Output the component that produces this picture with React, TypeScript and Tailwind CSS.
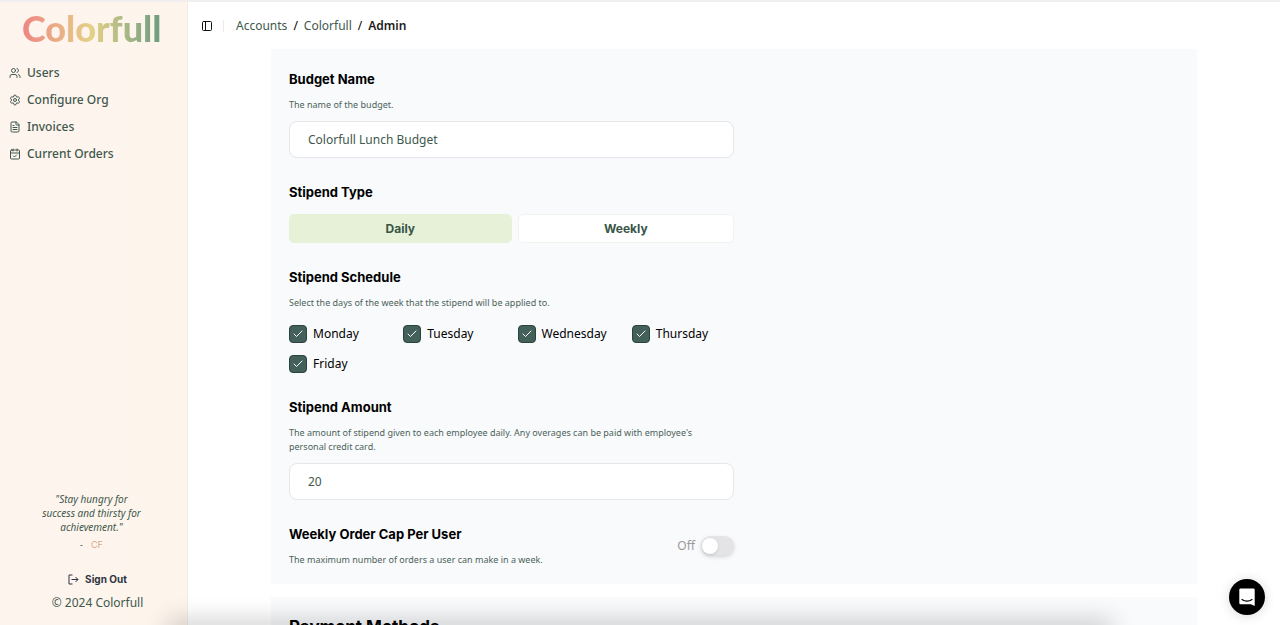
import { useState, type ReactNode } from 'react'
import { CalendarCheck, Check, FileText, PanelLeft, Settings, Users } from 'lucide-react'

type StipendType = 'Daily' | 'Weekly'

const NAV_ITEMS = [
  { label: 'Users', icon: Users },
  { label: 'Configure Org', icon: Settings },
  { label: 'Invoices', icon: FileText },
  { label: 'Current Orders', icon: CalendarCheck },
]

const DAYS = ['Monday', 'Tuesday', 'Wednesday', 'Thursday', 'Friday']

const Sidebar = () => (
  <aside className="flex w-[188px] shrink-0 flex-col border-r border-[#f6ebe2] bg-linear-to-r from-[#fef4ee] to-[#fdf5ec]">
    <a
      href="#"
      className="mt-1 ml-[22px] self-start bg-linear-to-r from-[#ec8583] via-[#e4d187] to-[#6a9c80] bg-clip-text font-[Lato,sans-serif] text-[36px] leading-[44px] font-black text-transparent"
    >
      Colorfull
    </a>

    <nav className="mt-[9px] flex flex-col px-[9px]">
      {NAV_ITEMS.map(({ label, icon: Icon }) => (
        <a key={label} href="#" className="flex h-[27px] items-center gap-1.5 text-xs font-medium text-[#40584d]">
          <Icon size={12} strokeWidth={2} />
          {label}
        </a>
      ))}
    </nav>

    <div className="mt-auto flex flex-col items-center pr-1 pb-[13px] text-[#40584d]">
      <p className="w-[104px] text-center text-[10px] leading-[14px] italic">
        &quot;Stay hungry for success and thirsty for achievement.&quot;
      </p>
      <p className="mt-1 flex gap-2 text-[9px] leading-[14px]">
        <span>-</span>
        <span className="font-[Inter,sans-serif] text-[#dca58e]">CF</span>
      </p>
      <button className="mt-5 ml-3 flex items-center gap-1.5 font-[Inter,sans-serif] text-[10px] leading-[14px] font-bold text-[#2f3542]">
        <svg width="11" height="11" viewBox="0 0 22 22" fill="none" stroke="currentColor" strokeWidth="2">
          <path d="M9 2H2v18h7M7 11h13M15 6l5 5-5 5" />
        </svg>
        Sign Out
      </button>
      <p className="mt-2 ml-3 text-xs leading-[18px]">© 2024 Colorfull</p>
    </div>
  </aside>
)

const Header = () => (
  <header className="flex h-[47px] shrink-0 items-center pl-[13px]">
    <button aria-label="Toggle sidebar" className="text-[#111]">
      <PanelLeft size={12} strokeWidth={2} />
    </button>
    <span className="ml-2.5 h-3 w-px bg-[#f3e8e8]" />
    <nav aria-label="Breadcrumb" className="ml-3 flex gap-1.5 text-xs text-[#40584d]">
      <a href="#">Accounts</a>
      <span className="text-black">/</span>
      <a href="#">Colorfull</a>
      <span className="text-black">/</span>
      <span className="font-semibold text-[#1c1c1c]">Admin</span>
    </nav>
  </header>
)

const Title = ({ children }: { children: ReactNode }) => (
  <h3 className="font-[Inter,sans-serif] text-[13px] leading-5 font-bold text-black">{children}</h3>
)

const Hint = ({ children }: { children: ReactNode }) => (
  <p className="mt-[9px] max-w-[430px] text-[9px] leading-[14px] text-[#4b6359]">{children}</p>
)

const TextField = ({ id, value, onChange }: { id: string; value: string; onChange: (value: string) => void }) => (
  <input
    id={id}
    value={value}
    onChange={(e) => onChange(e.target.value)}
    className="mt-[9px] h-[37px] w-full rounded-lg border border-[#e4e6e9] bg-white px-[18px] text-xs text-[#40584d]"
  />
)

const DayCheckbox = ({ day }: { day: string }) => (
  <label className="flex items-center gap-1.5 text-xs leading-[18px] text-black">
    <span className="grid shrink-0">
      <input
        type="checkbox"
        defaultChecked
        className="peer col-start-1 row-start-1 size-[18px] appearance-none rounded-[4px] border border-[#2b4439] bg-white checked:bg-[#44605a]"
      />
      <Check
        size={12}
        strokeWidth={2}
        className="pointer-events-none invisible col-start-1 row-start-1 place-self-center text-white peer-checked:visible"
      />
    </span>
    {day}
  </label>
)

const ChatLauncher = () => (
  <button
    aria-label="Open chat"
    className="fixed right-[15px] bottom-2.5 flex size-9 items-center justify-center rounded-full bg-black shadow-[0_1px_12px_rgba(0,0,0,0.15)]"
  >
    <svg width="18" height="20" viewBox="0 0 18 20" fill="none">
      <path d="M2.500 1.500h13a1.200 1.200 0 0 1 1.200 1.200V19l-3.700-1.800H2.500a1.200 1.200 0 0 1-1.200-1.200V2.700a1.200 1.200 0 0 1 1.200-1.200Z" fill="white" />
      <path d="M4 12.500c2.800 2.200 7.200 2.200 10 0" stroke="black" strokeWidth="1.200" strokeLinecap="round" />
    </svg>
  </button>
)

const App = () => {
  const [name, setName] = useState('Colorfull Lunch Budget')
  const [amount, setAmount] = useState('20')
  const [stipendType, setStipendType] = useState<StipendType>('Daily')
  const [capped, setCapped] = useState(false)

  return (
    <div className="relative flex h-screen flex-col overflow-hidden border-t-2 border-[#f0eeef] bg-white font-['Noto_Sans','Open_Sans',sans-serif]">
      <div className="flex min-h-0 flex-1">
        <Sidebar />
        <div className="flex min-w-0 flex-1 flex-col">
          <Header />
          <main className="min-h-0 flex-1 overflow-hidden">
            <div className="mx-auto flex max-w-[926px] flex-col gap-[13px]">
              <section className="bg-[#f9fafc] px-[18px] pt-5 pb-[17px]">
                <div className="flex max-w-[445px] flex-col gap-6">
                  <div>
                    <label htmlFor="budget-name">
                      <Title>Budget Name</Title>
                    </label>
                    <Hint>The name of the budget.</Hint>
                    <TextField id="budget-name" value={name} onChange={setName} />
                  </div>

                  <div>
                    <Title>Stipend Type</Title>
                    <div className="mt-3 grid grid-cols-[36fr_35fr] gap-1.5">
                      {(['Daily', 'Weekly'] as const).map((type) => (
                        <button
                          key={type}
                          aria-pressed={stipendType === type}
                          onClick={() => setStipendType(type)}
                          className={`h-[29px] rounded-[5px] border font-[Inter,sans-serif] text-xs font-bold text-[#365546] ${
                            stipendType === type ? 'border-[#e7f1d8] bg-[#e7f1d8]' : 'border-[#f0f3ee] bg-white'
                          }`}
                        >
                          {type}
                        </button>
                      ))}
                    </div>
                  </div>

                  <div>
                    <Title>Stipend Schedule</Title>
                    <Hint>Select the days of the week that the stipend will be applied to.</Hint>
                    <div className="mt-[15px] grid grid-cols-4 gap-3">
                      {DAYS.map((day) => (
                        <DayCheckbox key={day} day={day} />
                      ))}
                    </div>
                  </div>

                  <div>
                    <label htmlFor="stipend-amount">
                      <Title>Stipend Amount</Title>
                    </label>
                    <Hint>
                      The amount of stipend given to each employee daily. Any overages can be paid with employee&apos;s
                      personal credit card.
                    </Hint>
                    <TextField id="stipend-amount" value={amount} onChange={setAmount} />
                  </div>

                  <div className="flex items-center justify-between">
                    <div>
                      <Title>Weekly Order Cap Per User</Title>
                      <Hint>The maximum number of orders a user can make in a week.</Hint>
                    </div>
                    <label className="flex items-center gap-1.5 text-xs text-[#999]">
                      {capped ? 'On' : 'Off'}
                      <input
                        type="checkbox"
                        role="switch"
                        checked={capped}
                        onChange={(e) => setCapped(e.target.checked)}
                        className="flex h-[19px] w-[33px] appearance-none items-center rounded-full bg-[#e4e4e6] px-px shadow-[0_2px_4px_rgba(0,0,0,0.15)] before:size-4 before:rounded-full before:bg-white before:shadow-sm checked:justify-end checked:bg-[#44605a]"
                      />
                    </label>
                  </div>
                </div>
              </section>

              <section className="bg-[#f9fafc] px-[18px] py-4">
                <h2 className="font-[Inter,sans-serif] text-[17px] leading-7 font-bold text-black">Payment Methods</h2>
              </section>
            </div>
          </main>
        </div>
      </div>

      {/* soft shade along the bottom edge */}
      <div className="pointer-events-none absolute inset-x-[170px] -bottom-2 h-2 shadow-[0_0_24px_2px_rgba(0,0,0,0.3)]" />
      <ChatLauncher />
    </div>
  )
}

export default App
